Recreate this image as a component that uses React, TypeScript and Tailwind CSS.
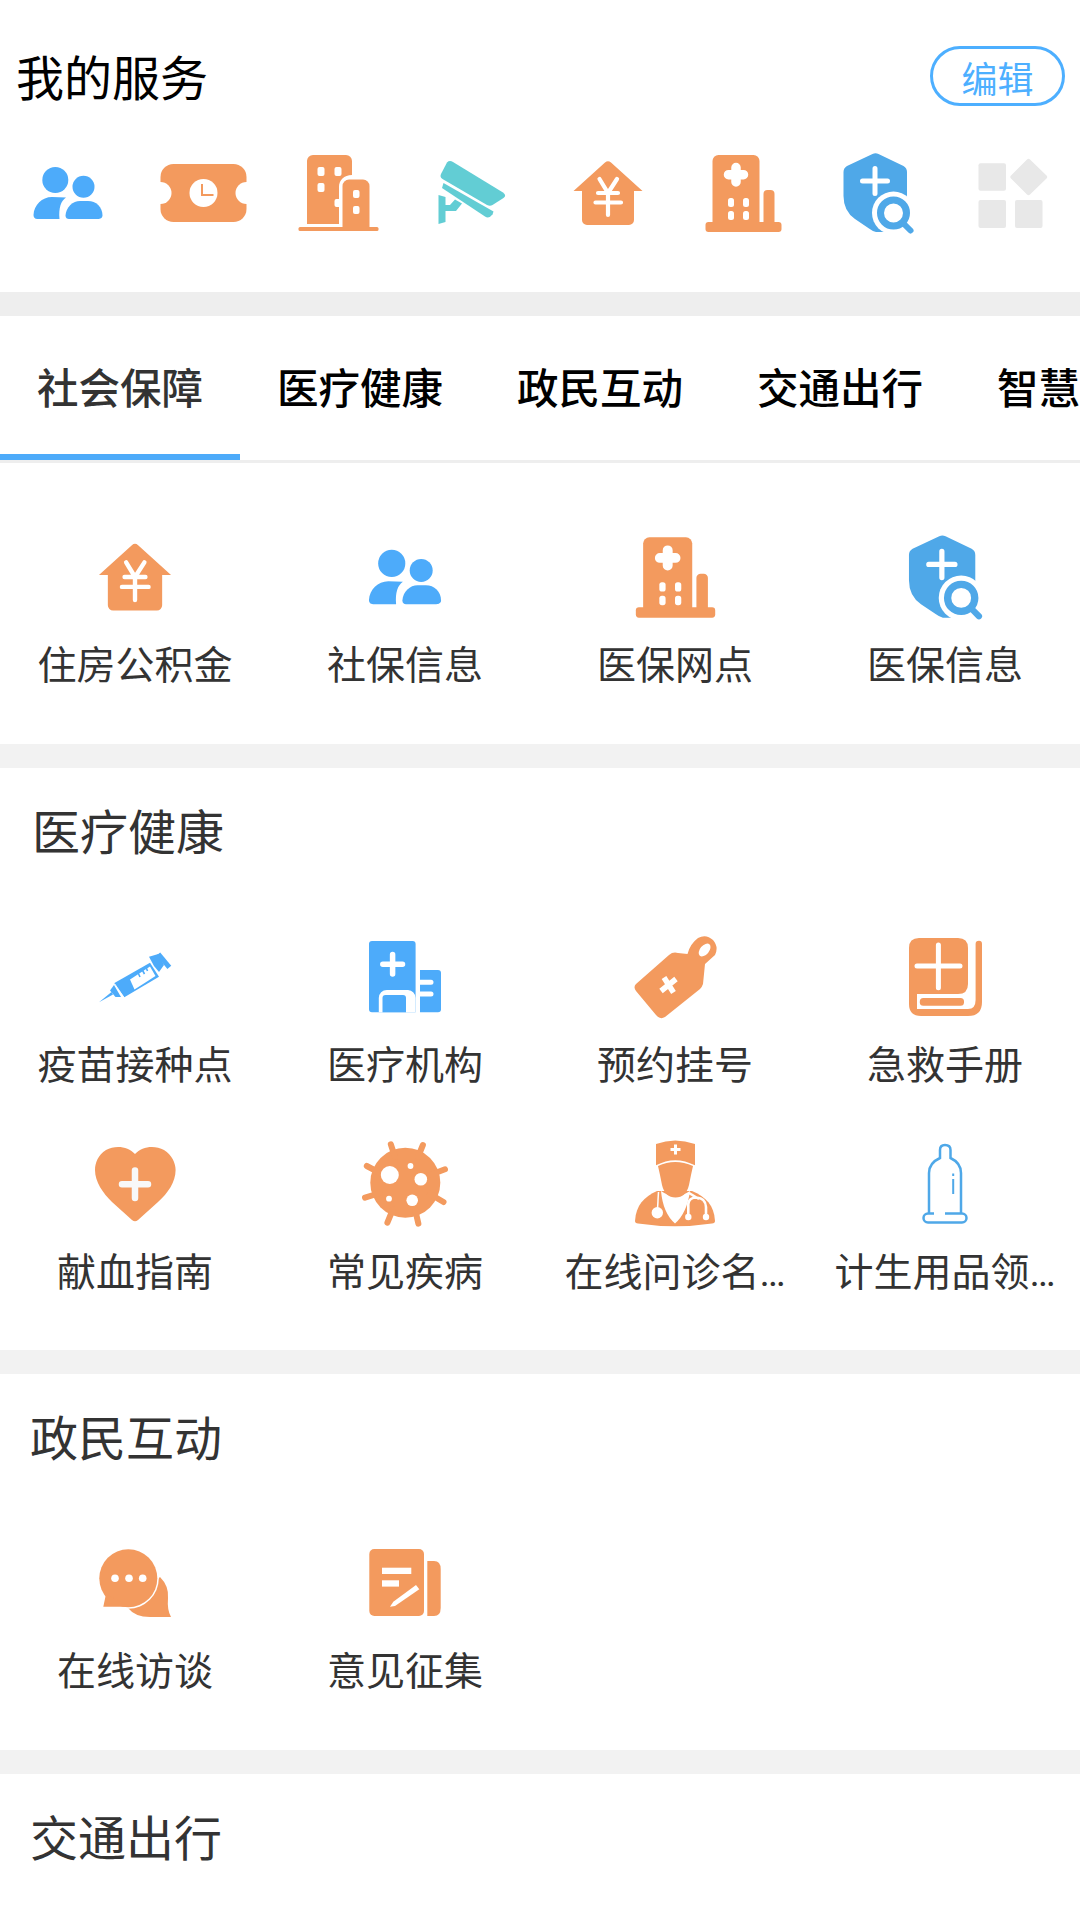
import React from "react";

const O = "#f39a5e";
const B = "#4dabfa";
const S = "#4fa8e8";

type IconP = { size?: number };
const V = ({ size = 90, vb = "-5 -5 90 90", children }: { size?: number; vb?: string; children: React.ReactNode }) => (
  <svg width={size} height={size} viewBox={vb} className="block shrink-0">
    {children}
  </svg>
);

const People = ({ size }: IconP) => (
  <V size={size}>
    <g fill={B}>
      <circle cx="27.3" cy="27" r="13" />
      <circle cx="55.5" cy="33.7" r="11" />
      <path d="M5.5 62C6 52 14 44 24 44L38 44.6C33 48 30.5 55 31.5 66L9.5 66C6.5 66 5.5 64 5.5 62Z" />
      <path d="M37.5 62.5C38 54 45 48 52 48L60 48C68 48 74.5 54 74.5 62.5C74.5 65 72 66 70 66L41 66C39 66 37.5 65 37.5 62.5Z" />
    </g>
  </V>
);
const Ticket = ({ size }: IconP) => (
  <V size={size}>
    <rect x="-2.5" y="11" width="86" height="58" rx="13" fill={O} />
    <circle cx="-2.5" cy="40" r="11" fill="#fff" />
    <circle cx="83.5" cy="40" r="11" fill="#fff" />
    <circle cx="40.5" cy="40" r="14" fill="#fff" />
    <path d="M39 31V42H50.5" fill="none" stroke={O} strokeWidth="2" />
  </V>
);
const Building = ({ size }: IconP) => (
  <V size={size}>
    <path fill={O} d="M9 71V8a6 6 0 0 1 6-6h33a6 6 0 0 1 6 6V22C46 22 41 27 41 34V71Z" />
    <path fill={O} d="M44.5 74V33a6.5 6.5 0 0 1 6.5-6.5h14a6.5 6.5 0 0 1 6.5 6.5V74Z" />
    <rect x="0.5" y="74" width="80" height="4" rx="1.5" fill={O} />
    <g fill="#fff">
      <rect x="19.5" y="14" width="7" height="9" rx="2" />
      <rect x="36.5" y="14" width="7" height="9" rx="2" />
      <rect x="19.5" y="30" width="7" height="9" rx="2" />
      <rect x="36.5" y="46" width="7" height="8" rx="2" />
      <rect x="55" y="37" width="6.5" height="8" rx="2" />
      <rect x="55" y="53" width="6.5" height="8" rx="2" />
    </g>
  </V>
);
const Camera = ({ size }: IconP) => (
  <V size={size}>
    <g fill="#62cdd4">
      <path d="M14 9.5Q16.500 7 20 9L70 39.500Q74 42.500 70.500 45L59.500 52Q57 53.500 54 52L9.500 26Q6.500 24 8 21Z" />
      <path d="M10.500 30L60.500 58.500L59.500 61.500Q56 66 52 63.500L9 35Z" />
      <path d="M5.500 42L12.500 44V52H17L22 46.500L29 50.500L23 58H12.500V69L5.500 71Z" />
    </g>
  </V>
);
const House = ({ size }: IconP) => (
  <V size={size}>
    <path fill={O} d="M37 9.500Q40 7 43 9.500L74.500 38H66V67a5 5 0 0 1-5 5H19a5 5 0 0 1-5-5V38H5.500Z" />
    <path d="M31.500 26L40 40L49 26M30 40H50M27.500 49.500H53M40 40V62" fill="none" stroke="#fff" strokeWidth="4.200" strokeLinecap="round" strokeLinejoin="round" />
  </V>
);
const Hospital = ({ size }: IconP) => (
  <V size={size}>
    <g fill={O}>
      <path d="M9.500 72V8a6 6 0 0 1 6-6h35a6 6 0 0 1 6 6V72Z" />
      <path d="M60.500 72V41a4 4 0 0 1 4-4h3a4 4 0 0 1 4 4V72Z" />
      <rect x="2.500" y="69" width="76" height="10" rx="3" />
    </g>
    <path d="M33 14.500V29M25.500 21.700H40.500" stroke="#fff" strokeWidth="9.500" strokeLinecap="round" fill="none" />
    <g fill="#fff">
      <rect x="25" y="45" width="6" height="9" rx="2.500" />
      <rect x="40" y="45" width="6" height="9" rx="2.500" />
      <rect x="25" y="58" width="6" height="9" rx="2.500" />
      <rect x="40" y="58" width="6" height="9" rx="2.500" />
    </g>
  </V>
);
const Shield = ({ size }: IconP) => (
  <V size={size}>
    <path fill={S} d="M34.500 1Q37.500 -0.500 40.500 1L65.500 13Q69 15 69 19V50H50V79H38Q35 78.500 31 75.500L17 66Q5.500 58 5.500 43V19Q5.500 15 9 13Z" />
    <circle cx="55.500" cy="60" r="21.500" fill="#fff" />
    <circle cx="55.500" cy="60" r="13" fill="#fff" stroke={S} strokeWidth="7" />
    <path d="M66 71L72.500 77.500" stroke={S} strokeWidth="6" strokeLinecap="round" />
    <path d="M37 15.500V40.500M24.500 28H49.500" stroke="#fff" strokeWidth="5" strokeLinecap="round" fill="none" />
  </V>
);
const Apps = ({ size }: IconP) => (
  <V size={size}>
    <g fill="#e8e8e8">
      <rect x="5.500" y="10.300" width="27.500" height="27.500" rx="2" />
      <rect x="5.500" y="47" width="27.500" height="28" rx="2" />
      <rect x="42" y="47" width="27.500" height="28" rx="2" />
      <path d="M54 6.500Q55.500 5 57 6.500L73.500 22.500Q75 24 73.500 25.500L57 41.500Q55.500 43 54 41.500L38 25.500Q36.500 24 38 22.500Z" />
    </g>
  </V>
);

const G = "0 0 94 94";
const Syringe = () => (
  <V size={94} vb={G}>
    <g fill={B}>
      <path d="M11 72.300L23.500 62L25 64.500Z" />
      <path d="M22 60.500L26 55L33 67L27.500 67Z" />
      <path d="M26 53.300L62 32.700L71 46.700L36.300 67.300Z" />
      <path d="M61 26.700L70.300 24L76 35L71 42L66 36Z" />
    </g>
    <path d="M70.300 24L81.300 37.300" stroke={B} strokeWidth="5" fill="none" />
    <path d="M42 49.500L62 36.500L67.500 46L46.500 59.500Z" fill="#fff" />
    <path d="M49.500 41.500L52 47M53.500 38.500L56.500 44M57.500 36L59.500 41" stroke={B} strokeWidth="1.600" />
    <path d="M26.500 53.500L36 67.500" stroke="#fff" strokeWidth="0.900" />
  </V>
);
const Clinic = () => (
  <V size={94} vb={G}>
    <path fill={B} d="M11 14a3 3 0 0 1 3-3h40.600a3 3 0 0 1 3 3V82.300H14a3 3 0 0 1-3-3Z" />
    <path fill={B} d="M62 40H80a3 3 0 0 1 3 3V79.300a3 3 0 0 1-3 3H62Z" />
    <path fill="#fff" d="M20.800 82.300V68a8 8 0 0 1 8-8H50a8 8 0 0 1 7.600 8V82.300Z" />
    <path fill={B} d="M24.500 82.300V68a3 3 0 0 1 3-3H45a3 3 0 0 1 3 3V82.300Z" />
    <path d="M34.600 24.500V44M24.800 34.300H44.500" stroke="#fff" strokeWidth="5.500" strokeLinecap="round" />
    <path d="M62 52.300H73M62 64H73" stroke="#fff" strokeWidth="5" strokeLinecap="round" />
  </V>
);
const Tag = () => (
  <V size={94} vb={G}>
    <path fill={O} d="M8 54L41 25Q45 21.500 50 23L59.500 24Q62 14 70 8Q78 3.500 85 10Q91 17 87 25L77 34L75 54Q74 57 72 59L37 87Q32 90 28 85L8 61Q5 57 8 54Z" />
    <ellipse cx="76.600" cy="20" rx="4.500" ry="7.500" transform="rotate(40 76.600 20)" fill="#fff" />
    <path d="M33 61L48 49M36 47.500L45.500 62.500" stroke="#fff" strokeWidth="5.500" />
  </V>
);
const Book = () => (
  <V size={94} vb={G}>
    <path fill={O} d="M11 18Q11 8 21 8H60Q70 8 70 18V54Q70 64 60 64H19V79H70Q77.600 79 77.600 70V14Q77.600 10.700 81 10.700Q84 10.700 84 14V72Q84 86 70 86H23Q11 86 11 74Z" />
    <rect x="21.800" y="68" width="44.200" height="7.700" rx="3.500" fill={O} />
    <path d="M40.400 15V57.700M19 36H62" stroke="#fff" strokeWidth="5" strokeLinecap="round" />
  </V>
);
const Heart = () => (
  <V size={94} vb={G}>
    <path fill={O} d="M47 17C40 9 27 8 18 13C10 18 7 26 7 33C7 45 15 56 24 65L44 83Q47 85.500 50 83L70 65C80 56 87.600 45 87.600 33C87.600 26 84 18 76 13C67 8 54 9 47 17Z" />
    <path d="M47 33.500V61M34 47.300H60" stroke="#f8f8f8" strokeWidth="6.500" strokeLinecap="round" />
  </V>
);
const Virus = () => (
  <V size={94} vb={G}>
    <circle cx="47.300" cy="45.700" r="35" fill={O} />
    <path d="M32.800 7.300L37 20M64.900 8L60 20M87 32.300L72 38M85.500 65L72 57M60.400 86.700L57 72M29.400 85.700L35 72M7 60.700L22 56M8.800 29L22 36" stroke={O} strokeWidth="6" strokeLinecap="round" />
    <g fill="#fff">
      <circle cx="31.800" cy="38" r="9" />
      <circle cx="62.800" cy="42.300" r="6.300" />
      <circle cx="54.200" cy="63.300" r="5.800" />
      <circle cx="31" cy="61.700" r="2.900" />
      <circle cx="52.500" cy="29" r="2.900" />
    </g>
  </V>
);
const Doctor = () => (
  <V size={94} vb={G}>
    <path fill={O} d="M7 84C8 68 16 60 29 54H64C78 60 86 68 87 84Q87 86 84 86.500Q47 92 10 86.500Q7 86 7 84Z" />
    <path fill="#fff" d="M33 54Q35 76 47 86.500Q59 76 62 54Q47 64 33 54Z" />
    <path d="M30.500 55L29.500 72" stroke="#fff" strokeWidth="1.500" fill="none" />
    <path d="M60.300 78V67Q61 60.500 68.500 60.500Q77.500 61 78 70V78M61 56L71 62" stroke="#fff" strokeWidth="2.600" fill="none" />
    <circle cx="29.300" cy="75.700" r="5.700" fill="#fff" />
    <circle cx="60.300" cy="80" r="3.200" fill="#fff" />
    <circle cx="78" cy="80" r="3.200" fill="#fff" />
    <path fill={O} d="M30 29Q47 21 65 29L63 38L61 48Q58 60.500 47.500 60.500Q37 60.500 34 48L32 38Z" />
    <path fill={O} d="M28 7Q47 0 67 7V28.300Q47 18 28 28.300Z" />
    <path d="M47.500 7.500V17.500M42.500 12.500H52.500" stroke="#fff" strokeWidth="3" />
  </V>
);
const Sheath = () => (
  <V size={94} vb={G}>
    <g fill="none" stroke={S} strokeWidth="2.500">
      <path d="M31 76V36Q31 26 42 21V13Q42 8 47 8Q52.500 8 52.500 13V21Q63 26 63 36V76" />
      <path d="M36 76.500H30a4.500 4.500 0 0 0 0 9H64a4.500 4.500 0 0 0 0-9H47" />
      <path d="M55.200 36.500V39M55.200 42V57" strokeWidth="2" />
    </g>
  </V>
);
const Chat = () => (
  <V size={94} vb={G}>
    <path fill={O} d="M40 72Q47 81 62 81H83Q79 74 80 62Q81 50 72 41Z" />
    <circle cx="40.300" cy="42.300" r="30.500" fill="#fff" />
    <circle cx="40.300" cy="42.300" r="29" fill={O} />
    <path fill={O} d="M18 58L15.300 70.700H42Z" />
    <g fill="#fff">
      <circle cx="27" cy="42.300" r="3.800" />
      <circle cx="41" cy="42.300" r="3.800" />
      <circle cx="54.700" cy="42.300" r="3.800" />
    </g>
  </V>
);
const Doc = () => (
  <V size={94} vb={G}>
    <rect x="11.300" y="13" width="54.700" height="67" rx="5" fill={O} />
    <path fill={O} d="M69.300 25H76Q82.700 25 82.700 33V72Q82.700 80 76 80H69.300Z" />
    <g fill="#fff">
      <rect x="24" y="31.700" width="29.300" height="6.300" />
      <rect x="24" y="44.300" width="17" height="6.300" />
      <path d="M32 70.700L35.300 65.700L58 49L61.300 53.300L37 70Z" />
    </g>
  </V>
);

const Cell = ({ icon, label }: { icon: React.ReactNode; label: string }) => (
  <div className="flex flex-col items-center">
    {icon}
    <div className="mt-[19px] h-[46px] whitespace-nowrap text-[39px] leading-[46px] text-[#333333]">{label}</div>
  </div>
);

const Band = () => <div className="h-[24px] bg-[#f2f2f2]" />;
const Title = ({ children, left }: { children: string; left: string }) => (
  <h2 className={`h-[64px] pt-[2px] text-[48px] font-normal leading-[64px] text-[#333333] ${left}`}>{children}</h2>
);

export default function App() {
  const tabs = ["社会保障", "医疗健康", "政民互动", "交通出行", "智慧城市"];
  return (
    <div className="h-[1920px] w-[1080px] overflow-hidden bg-white font-['Roboto','Noto_Sans_CJK_SC',sans-serif]">
      <header className="h-[292px] pt-[46px]">
        <div className="flex h-[60px] items-center justify-between pl-[16px] pr-[15px]">
          <h1 className="pt-[7px] text-[48px] font-normal leading-[60px] text-black">我的服务</h1>
          <button className="h-[60px] w-[135px] rounded-full border-[3px] border-[#4dafff] pt-[7px] text-[36px] leading-[50px] text-[#4dafff]">编辑</button>
        </div>
        <div className="mt-[42px] grid grid-cols-8 justify-items-center">
          <People />
          <Ticket />
          <Building />
          <Camera />
          <House />
          <Hospital />
          <Shield />
          <Apps />
        </div>
      </header>
      <div className="h-[24px] bg-[#eeeeee]" />
      <nav className="flex h-[147px] overflow-hidden border-b-[3px] border-[#eeeeee]">
        {tabs.map((t, i) => (
          <div
            key={t}
            className={
              i === 0
                ? "flex h-[144px] w-[240px] shrink-0 items-center justify-center border-b-[6px] border-[#4dabfa] pt-[11px] text-[41.500px] font-medium text-[#333333]"
                : "flex h-[144px] w-[240px] shrink-0 items-center justify-center pb-[6px] pt-[11px] text-[41.500px] font-medium text-black"
            }
          >
            {t}
          </div>
        ))}
      </nav>
      <section className="grid grid-cols-4 pb-[55px] pt-[67px]">
        <Cell icon={<House size={94} />} label="住房公积金" />
        <Cell icon={<People size={94} />} label="社保信息" />
        <Cell icon={<Hospital size={94} />} label="医保网点" />
        <Cell icon={<Shield size={94} />} label="医保信息" />
      </section>
      <Band />
      <section className="pb-[54px] pt-[32px]">
        <Title left="pl-[32px]">医疗健康</Title>
        <div className="mt-[66px] grid grid-cols-4 gap-y-[48px]">
          <Cell icon={<Syringe />} label="疫苗接种点" />
          <Cell icon={<Clinic />} label="医疗机构" />
          <Cell icon={<Tag />} label="预约挂号" />
          <Cell icon={<Book />} label="急救手册" />
          <Cell icon={<Heart />} label="献血指南" />
          <Cell icon={<Virus />} label="常见疾病" />
          <Cell icon={<Doctor />} label="在线问诊名…" />
          <Cell icon={<Sheath />} label="计生用品领…" />
        </div>
      </section>
      <Band />
      <section className="pb-[55px] pt-[32px]">
        <Title left="pl-[30px]">政民互动</Title>
        <div className="mt-[66px] grid grid-cols-4">
          <Cell icon={<Chat />} label="在线访谈" />
          <Cell icon={<Doc />} label="意见征集" />
        </div>
      </section>
      <Band />
      <section className="pt-[32px]">
        <Title left="pl-[30px]">交通出行</Title>
      </section>
    </div>
  );
}
